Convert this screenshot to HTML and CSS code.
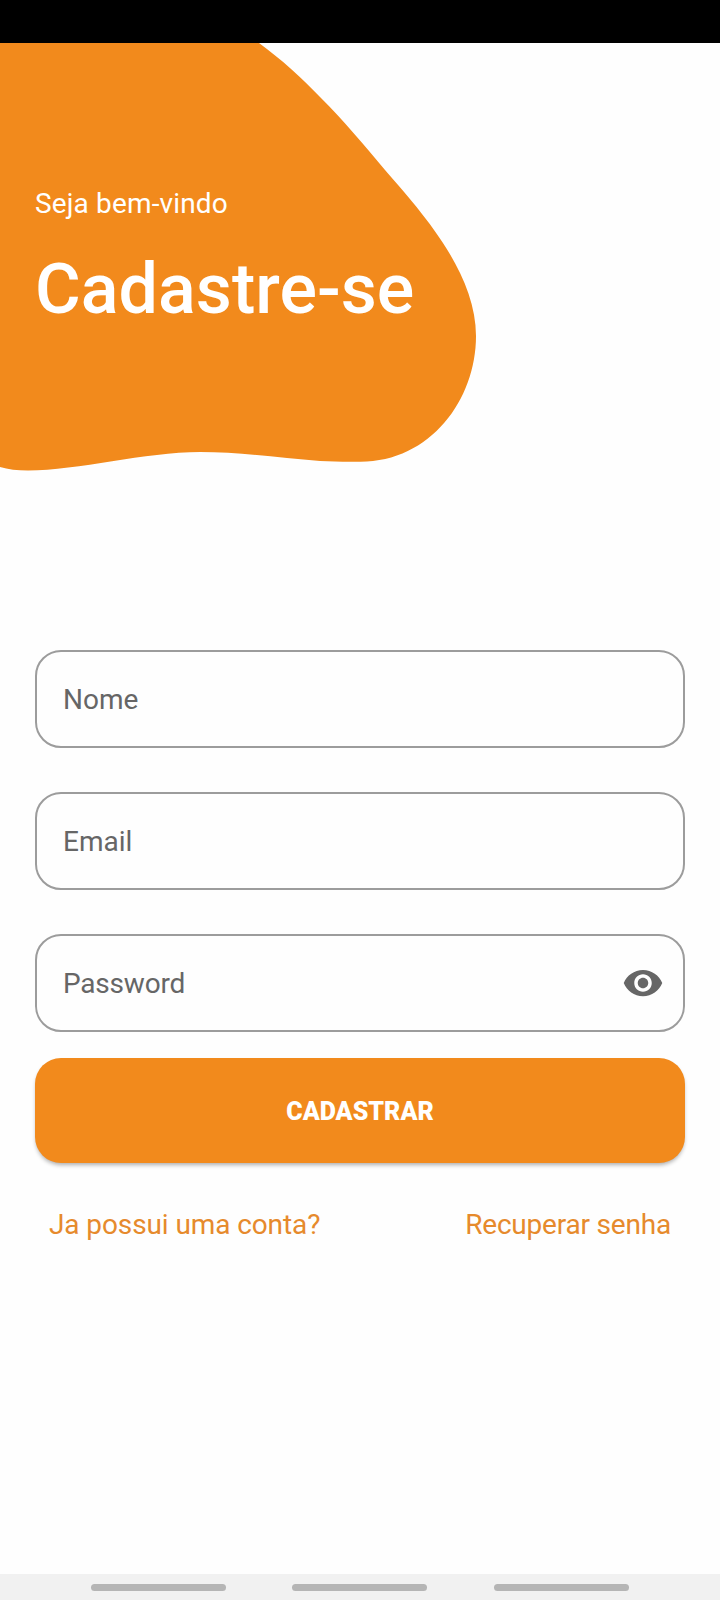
FILE: index.html
```html
<!DOCTYPE html>
<html lang="pt-BR">
<head>
<meta charset="utf-8">
<title>Cadastre-se</title>
<link rel="stylesheet" href="styles.css">
</head>
<body>
<div class="screen">
  <div class="status-bar"></div>
  <header class="hero">
    <svg class="blob" width="500" height="437" viewBox="0 43 500 437" aria-hidden="true">
      <path fill="#f28a1c" d="M0 43H259C281 59 303 79 320 97C345 122 365 146 385 170C413 203 476 268 476 336C476 400 430 462 360 461.700C346 462 333 461.600 320 461C280 458 240 452 200 452C145 452 78 470.500 28 470.500Q12 470.500 0 467Z"/>
    </svg>
    <p class="welcome">Seja bem-vindo</p>
    <h1 class="title">Cadastre-se</h1>
  </header>
  <form class="form">
    <label class="field"><span class="label">Nome</span></label>
    <label class="field"><span class="label">Email</span></label>
    <label class="field password"><span class="label">Password</span>
      <svg class="eye" width="42" height="42" viewBox="0 0 24 24" aria-hidden="true"><path fill="#666" d="M12 4.500C7 4.500 2.730 7.610 1 12c1.730 4.390 6 7.500 11 7.500s9.270-3.110 11-7.500c-1.730-4.390-6-7.500-11-7.500zM12 17c-2.760 0-5-2.240-5-5s2.240-5 5-5 5 2.240 5 5-2.240 5-5 5zm0-8c-1.660 0-3 1.340-3 3s1.340 3 3 3 3-1.340 3-3-1.340-3-3-3z"/></svg>
    </label>
    <button class="submit" type="button">CADASTRAR</button>
    <div class="links"><a class="link login">Ja possui uma conta?</a><a class="link recover">Recuperar senha</a></div>
  </form>
  <nav class="nav-bar"><span class="pill"></span><span class="pill"></span><span class="pill"></span></nav>
</div>
</body>
</html>
```
FILE: styles.css
```css
* { box-sizing: border-box; }
body { margin: 0; background: #fefefe; font-family: Roboto, sans-serif; }
.screen { width: 720px; height: 1600px; display: flex; flex-direction: column; }
.status-bar { height: 43px; background: #000; }
.hero { position: relative; height: 607px; padding: 142px 35px 0; color: #fff; }
.blob { position: absolute; left: 0; top: 0; }
.welcome { position: relative; margin: 0; font-size: 28px; line-height: 38px; letter-spacing: .15px; }
.title { position: relative; margin: 20px 0 0; font-size: 70px; line-height: 92px; font-weight: 500; letter-spacing: .05px; }
.form { flex: 1; padding: 0 35px; display: flex; flex-direction: column; }
.field { height: 98px; margin-bottom: 44px; padding: 0 19px 0 26px; border: 2px solid #9c9c9c; border-radius: 26px; display: flex; align-items: center; justify-content: space-between; }
.password { margin-bottom: 26px; }
.label { padding-top: 2px; font-size: 28px; line-height: 38px; color: #666; }
.password .label { letter-spacing: -.2px; }
.submit { height: 105px; padding: 3px 0 0; border: 0; border-radius: 26px; background: #f28a1c; color: #fff; font: 900 25px/32px Roboto, sans-serif; box-shadow: 0 3px 4px -1px rgba(0,0,0,.32); }
.links { display: flex; justify-content: space-between; padding: 43px 14px 0; }
.link { font-size: 28px; line-height: 38px; color: #e68a2c; }
.login { letter-spacing: -.1px; }
.recover { letter-spacing: -.2px; }
.nav-bar { height: 26px; padding: 10px 91px 0; background: #f1f1f1; display: flex; gap: 66px; }
.pill { width: 135px; height: 7px; border-radius: 4px; background: #b5b5b5; }
.pill:last-child { margin-left: 1px; }
```
